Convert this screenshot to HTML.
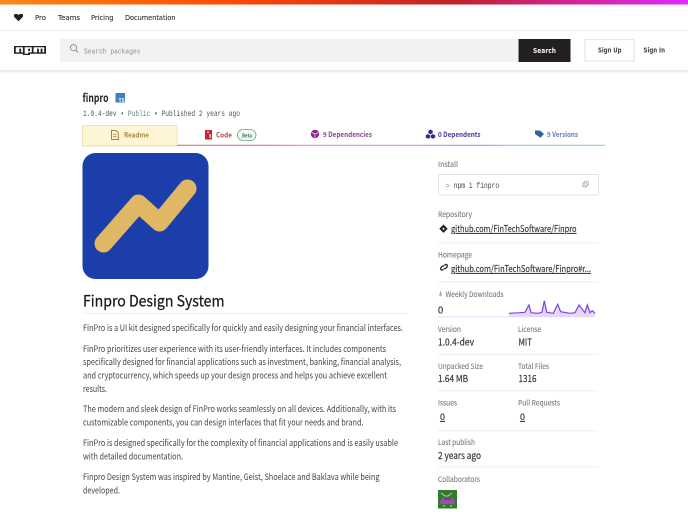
<!DOCTYPE html>
<html lang="en">
<head>
<meta charset="utf-8">
<title>finpro - npm</title>
<style>
html,body{margin:0;padding:0;width:688px;height:512px;overflow:hidden;background:#fff}
svg{display:block;filter:blur(.3px)}
text{white-space:pre}
.s{font-family:"Noto Sans CJK JP","Liberation Sans",sans-serif}
.p{font-family:"DejaVu Sans","Liberation Sans",sans-serif}
.m{font-family:"Liberation Mono","DejaVu Sans Mono",monospace}
.b{font-size:8.9px;fill:#444}
.l{font-size:7.6px;fill:#757575;stroke:#757575;stroke-width:.08px}
.v{font-size:9.4px;fill:#333;stroke:#333;stroke-width:.18px}
.n{font-size:7px;fill:#333;stroke:#333;stroke-width:.12px}
.t{font-size:6.9px;font-weight:700}
.a{font-size:9px;fill:#333;stroke:#333;stroke-width:.15px;text-decoration:underline}
</style>
</head>
<body>
<svg width="688" height="512" viewBox="0 0 688 512" xmlns="http://www.w3.org/2000/svg">
<defs>
<linearGradient id="top" x1="0" x2="1" y1="0" y2="0">
<stop offset="0" stop-color="#fb8817"/><stop offset=".33" stop-color="#ff4b01"/><stop offset=".66" stop-color="#c12127"/><stop offset="1" stop-color="#e02aff"/>
</linearGradient>
<linearGradient id="tab" x1="177" x2="605" y1="0" y2="0" gradientUnits="userSpaceOnUse">
<stop offset="0" stop-color="#d98a86"/><stop offset=".22" stop-color="#d99090"/><stop offset=".3" stop-color="#e2a0e0"/><stop offset=".52" stop-color="#df9fe0"/><stop offset=".72" stop-color="#c5a0e2"/><stop offset=".78" stop-color="#9fcfe9"/><stop offset="1" stop-color="#9fd2ea"/>
</linearGradient>
<linearGradient id="shadow" x1="0" x2="0" y1="0" y2="1">
<stop offset="0" stop-color="#000" stop-opacity=".1"/><stop offset="1" stop-color="#000" stop-opacity="0"/>
</linearGradient>
</defs>
<rect width="688" height="512" fill="#fff"/>
<rect width="688" height="4.5" fill="url(#top)"/>
<rect y="30" width="688" height="1" fill="#efefef"/>
<rect y="70" width="688" height="4" fill="url(#shadow)"/>

<path d="M18.500 21.200 14.600 17.400c-.9-1-.9-2.300-.2-3 .9-.8 2.700-.7 4.100.7 1.400-1.400 3.200-1.500 4.100-.7.7.7.7 2-.2 3z" fill="#231f20"/>
<text class="p n" x="35" y="20" textLength="11" lengthAdjust="spacingAndGlyphs">Pro</text>
<text class="p n" x="58" y="20" textLength="22" lengthAdjust="spacingAndGlyphs">Teams</text>
<text class="p n" x="91" y="20" textLength="22.500" lengthAdjust="spacingAndGlyphs">Pricing</text>
<text class="p n" x="125" y="20" textLength="50.500" lengthAdjust="spacingAndGlyphs">Documentation</text>

<svg x="14" y="46" width="32" height="9" viewBox="0 0 18 7" preserveAspectRatio="none" style="filter:none">
<path fill="#231f20" d="M0 0h18v6H9v1H5V6H0zM1 5h2V2h1v3h1V1H1zM6 1v5h2V5h2V1zM8 2h1v2H8zM11 1v4h2V2h1v3h1V2h1v3h1V1z"/>
</svg>
<rect x="60" y="39" width="458" height="23" fill="#f2f2f2"/>
<circle cx="73.500" cy="47.700" r="3.100" fill="none" stroke="#8a8a8a" stroke-width=".9"/>
<path d="M75.800 50 78.300 52.500" stroke="#8a8a8a" stroke-width=".9"/>
<text class="m" x="84" y="53.500" font-size="7.500" fill="#8d8d8d" textLength="56.500" lengthAdjust="spacingAndGlyphs">Search packages</text>
<rect x="518.500" y="39" width="52" height="23" fill="#231f20"/>
<text class="p" x="533" y="53" font-size="7" font-weight="700" fill="#f3f3f3" textLength="23" lengthAdjust="spacingAndGlyphs">Search</text>
<rect x="585" y="39.500" width="49" height="21.500" fill="#fff" stroke="#e6e6e6" stroke-width="1.200"/>
<text class="p" x="598" y="52.500" font-size="7" font-weight="700" fill="#444" textLength="23.500" lengthAdjust="spacingAndGlyphs">Sign Up</text>
<text class="p" x="643.500" y="52.500" font-size="7" font-weight="700" fill="#444" textLength="21.500" lengthAdjust="spacingAndGlyphs">Sign In</text>

<text class="s" x="82.500" y="102" font-size="11.500" font-weight="700" fill="#222" textLength="26" lengthAdjust="spacingAndGlyphs">finpro</text>
<rect x="115.500" y="93" width="9.500" height="9.500" fill="#3f7fc0"/>
<text class="s" x="118.500" y="101.800" font-size="5" font-weight="700" fill="#fff">TS</text>
<text class="m" x="83" y="116" font-size="7.800" fill="#555" textLength="157" lengthAdjust="spacingAndGlyphs">1.0.4-dev • <tspan fill="#5e8a8a">Public</tspan> • Published 2 years ago</text>

<path d="M82.500 146V125.500h94.500V146z" fill="#fdf5d3" stroke="#f5e6ad" stroke-width="1"/>
<rect x="82" y="145" width="95" height="1.200" fill="#f5e2a5"/>
<rect x="177" y="144.700" width="428" height="1.300" fill="url(#tab)"/>
<path d="M111.500 130.500h4.500l2.300 2.300v6.700h-6.800z" fill="none" stroke="#a5823c" stroke-width="1"/>
<path d="M113 134.500h3.500M113 136.700h3.500" stroke="#a5823c" stroke-width=".8"/>
<text class="s t" x="124" y="137.500" fill="#a88b4a" textLength="25" lengthAdjust="spacingAndGlyphs">Readme</text>
<path d="M205 130h7v9.500h-7z" fill="#c0282c"/><path d="M207.300 131.500h1.500v1.500h-1.500zM209.500 134h1.300v4h-1.300z" fill="#fbdcdc"/>
<text class="s t" x="216" y="137.500" fill="#c13f42" textLength="16" lengthAdjust="spacingAndGlyphs">Code</text>
<rect x="237.500" y="129.500" width="18.500" height="11" rx="5.500" fill="#f4fbf7" stroke="#5fa583" stroke-width=".8"/>
<text class="s" x="242" y="137.300" font-size="5.300" font-weight="700" fill="#3f6f57" textLength="10" lengthAdjust="spacingAndGlyphs">Beta</text>
<circle cx="315" cy="134" r="4.200" fill="#8a2b8e"/><path d="M311.500 132.500 315 134l3.500-1.500M315 134v4" stroke="#f5dcf5" stroke-width=".7" fill="none"/>
<text class="s t" x="323" y="137" fill="#87438c" textLength="49" lengthAdjust="spacingAndGlyphs">9 Dependencies</text>
<path d="M430.500 129.500l2.200 1.200v2.400l-2.200 1.200-2.200-1.200v-2.400zM428 134l2.200 1.200v2.400L428 138.800l-2.200-1.200v-2.400zM433 134l2.200 1.200v2.400L433 138.800l-2.200-1.200v-2.400z" fill="#3f2a8c"/>
<text class="s t" x="438" y="137" fill="#473b8f" textLength="42.500" lengthAdjust="spacingAndGlyphs">0 Dependents</text>
<path d="M535 130.500h5l4 3.500-3.500 3.700-5.500-3.700z" fill="#2f62a0"/>
<text class="s t" x="547" y="137" fill="#5a83b8" textLength="31" lengthAdjust="spacingAndGlyphs">9 Versions</text>

<rect x="82.500" y="153" width="126" height="126" rx="13" fill="#1b3eaa"/>
<path d="M103.500 243.500 138.500 203.500 159.500 222.500 187.500 188.500" fill="none" stroke="#e0b865" stroke-width="18" stroke-linecap="round" stroke-linejoin="round"/>

<text class="s" x="83" y="306.500" font-size="15.800" fill="#1a1a1a" stroke="#1a1a1a" stroke-width=".25" textLength="141.500" lengthAdjust="spacingAndGlyphs">Finpro Design System</text>
<rect x="82" y="312.800" width="326" height="1" fill="#eeeeee"/>

<text class="s b" x="83" y="331" textLength="320" lengthAdjust="spacingAndGlyphs">FinPro is a UI kit designed specifically for quickly and easily designing your financial interfaces.</text>
<text class="s b" x="83" y="352" textLength="303" lengthAdjust="spacingAndGlyphs">FinPro prioritizes user experience with its user-friendly interfaces. It includes components</text>
<text class="s b" x="83" y="365" textLength="318" lengthAdjust="spacingAndGlyphs">specifically designed for financial applications such as investment, banking, financial analysis,</text>
<text class="s b" x="83" y="378.500" textLength="304" lengthAdjust="spacingAndGlyphs">and cryptocurrency, which speeds up your design process and helps you achieve excellent</text>
<text class="s b" x="83" y="392" textLength="24" lengthAdjust="spacingAndGlyphs">results.</text>
<text class="s b" x="83" y="412" textLength="313" lengthAdjust="spacingAndGlyphs">The modern and sleek design of FinPro works seamlessly on all devices. Additionally, with its</text>
<text class="s b" x="83" y="425.500" textLength="280.500" lengthAdjust="spacingAndGlyphs">customizable components, you can design interfaces that fit your needs and brand.</text>
<text class="s b" x="83" y="446" textLength="315" lengthAdjust="spacingAndGlyphs">FinPro is designed specifically for the complexity of financial applications and is easily usable</text>
<text class="s b" x="83" y="459.500" textLength="100" lengthAdjust="spacingAndGlyphs">with detailed documentation.</text>
<text class="s b" x="83" y="480" textLength="296.500" lengthAdjust="spacingAndGlyphs">Finpro Design System was inspired by Mantine, Geist, Shoelace and Baklava while being</text>
<text class="s b" x="83" y="493.500" textLength="37" lengthAdjust="spacingAndGlyphs">developed.</text>

<text class="s l" x="438" y="167" textLength="20" lengthAdjust="spacingAndGlyphs">Install</text>
<rect x="438.500" y="174.500" width="160" height="20.500" rx="2" fill="#fff" stroke="#e2e2e2"/>
<text class="m" x="445.500" y="188" font-size="7.500" fill="#888">&gt;</text>
<text class="m" x="453.700" y="188" font-size="7.800" fill="#444" textLength="45.500" lengthAdjust="spacingAndGlyphs">npm i finpro</text>
<rect x="583" y="182.500" width="4" height="4.500" rx="1" fill="none" stroke="#9a9a9a" stroke-width=".8"/>
<rect x="584.500" y="181" width="4" height="4.500" rx="1" fill="none" stroke="#bdbdbd" stroke-width=".8"/>

<text class="s l" x="438" y="217" textLength="34" lengthAdjust="spacingAndGlyphs">Repository</text>
<path d="M443.500 224.500 447.700 228.700 443.500 232.900 439.300 228.700z" fill="#222"/><circle cx="443.500" cy="228.700" r="1" fill="#fff"/>
<text class="s a" x="451" y="232" textLength="125.500" lengthAdjust="spacingAndGlyphs">github.com/FinTechSoftware/Finpro</text>
<rect x="438" y="242.300" width="160" height="1" fill="#eeeeee"/>

<text class="s l" x="438" y="257.500" textLength="34" lengthAdjust="spacingAndGlyphs">Homepage</text>
<path d="M444.500 265.500 445.300 264.500a1.500 1.500 0 0 1 2 2L446 268.200a1.500 1.500 0 0 1-2 0M443.500 269 442.700 270a1.500 1.500 0 0 1-2-2L442 266.300a1.500 1.500 0 0 1 2 0" fill="none" stroke="#222" stroke-width="1.200"/>
<text class="s a" x="451" y="272" textLength="140" lengthAdjust="spacingAndGlyphs">github.com/FinTechSoftware/Finpro#r...</text>
<rect x="438" y="281.300" width="160" height="1" fill="#eeeeee"/>

<path d="M440.500 291v3.500M439 295.800h3M439.300 293.500l1.200 1.200 1.200-1.200" fill="none" stroke="#8a8a8a" stroke-width=".7"/>
<text class="s l" x="445.500" y="297" textLength="58" lengthAdjust="spacingAndGlyphs">Weekly Downloads</text>
<text class="s v" x="438" y="313.500">0</text>
<rect x="438" y="316.300" width="71" height="1" fill="#e5ddf8"/>
<path d="M509 313.300 520 312.700 525 312.300 529 305 531 312.700 538 313.300 542 312.300 544.300 300.700 546.700 312.300 553.300 313.300 557.700 304.300 560.700 311.700 570 313.300 575 312.700 579 305 585 312.700 587.300 305 590 312.700 592.300 310.700 595 313.300V317.300H509Z" fill="#e6d8fb"/>
<path d="M509 313.300 520 312.700 525 312.300 529 305 531 312.700 538 313.300 542 312.300 544.300 300.700 546.700 312.300 553.300 313.300 557.700 304.300 560.700 311.700 570 313.300 575 312.700 579 305 585 312.700 587.300 305 590 312.700 592.300 310.700 595 313.300" fill="none" stroke="#7a45e0" stroke-width="1.200"/>

<text class="s l" x="438" y="332" textLength="23" lengthAdjust="spacingAndGlyphs">Version</text>
<text class="s l" x="518" y="332" textLength="23" lengthAdjust="spacingAndGlyphs">License</text>
<text class="s v" x="438" y="345.500" textLength="36" lengthAdjust="spacingAndGlyphs">1.0.4-dev</text>
<text class="s v" x="518.500" y="345.500" textLength="13.500" lengthAdjust="spacingAndGlyphs">MIT</text>
<rect x="438" y="354" width="160" height="1" fill="#eeeeee"/>

<text class="s l" x="438" y="369" textLength="45" lengthAdjust="spacingAndGlyphs">Unpacked Size</text>
<text class="s l" x="518" y="369" textLength="31" lengthAdjust="spacingAndGlyphs">Total Files</text>
<text class="s v" x="438" y="382" textLength="30" lengthAdjust="spacingAndGlyphs">1.64 MB</text>
<text class="s v" x="518.500" y="382" textLength="18" lengthAdjust="spacingAndGlyphs">1316</text>
<rect x="438" y="390.300" width="160" height="1" fill="#eeeeee"/>

<text class="s l" x="438" y="405.500" textLength="19" lengthAdjust="spacingAndGlyphs">Issues</text>
<text class="s l" x="518" y="405.500" textLength="42" lengthAdjust="spacingAndGlyphs">Pull Requests</text>
<text class="s a" x="440" y="420">0</text>
<text class="s a" x="520" y="420">0</text>
<rect x="438" y="430.300" width="160" height="1" fill="#eeeeee"/>

<text class="s l" x="438" y="445" textLength="37" lengthAdjust="spacingAndGlyphs">Last publish</text>
<text class="s v" x="438" y="458.800" textLength="43" lengthAdjust="spacingAndGlyphs">2 years ago</text>
<rect x="438" y="466.300" width="160" height="1" fill="#eeeeee"/>

<text class="s l" x="438" y="482" textLength="42" lengthAdjust="spacingAndGlyphs">Collaborators</text>
<rect x="438" y="490" width="19" height="18.500" fill="#2f7d2a"/>
<path d="M441 493l4 3h3l4-3" fill="none" stroke="#b9a7c9" stroke-width="1.200"/>
<rect x="440.500" y="500" width="14" height="4" fill="#b23fd0"/>
<rect x="442" y="498" width="2" height="2" fill="#b23fd0"/><rect x="451" y="498" width="2" height="2" fill="#b23fd0"/>
<rect x="443" y="505" width="2" height="1.500" fill="#9db59a"/><rect x="450" y="505" width="2" height="1.500" fill="#9db59a"/>
</svg>
</body>
</html>
